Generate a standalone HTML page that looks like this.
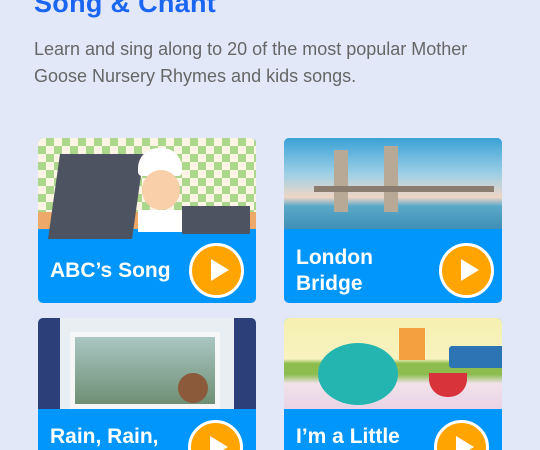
<!DOCTYPE html>
<html><head><style>
*{margin:0;padding:0;box-sizing:border-box}
html,body{width:540px;height:450px;overflow:hidden}
body{background:#e2e8f8;font-family:"Liberation Sans",sans-serif;position:relative}
h1{position:absolute;left:34px;top:-12px;font-size:27px;font-weight:bold;color:#1a66f2;letter-spacing:0.3px}
p{position:absolute;left:34px;top:36px;width:480px;font-size:18px;line-height:27px;color:#666}
.card{position:absolute;width:218px;height:165px;border-radius:5px;overflow:hidden;background:#0096fb}
.img{position:absolute;left:0;top:0;width:218px;height:91px}
.lbl{position:absolute;left:12px;color:#fff;font-size:21px;font-weight:bold;line-height:26px}
.btn{position:absolute;width:55px;height:55px;border-radius:50%;background:#ffa400;border:3px solid #fff}
.btn:after{content:"";position:absolute;left:19px;top:13px;border-left:18px solid #fff;border-top:11px solid transparent;border-bottom:11px solid transparent}
</style></head><body>
<h1>Song &amp; Chant</h1>
<p>Learn and sing along to 20 of the most popular Mother Goose Nursery Rhymes and kids songs.</p>

<div class="card" style="left:38px;top:138px">
 <div class="img" style="background:repeating-conic-gradient(#acd68c 0 25%,#fdf5e4 0 50%) 0 0/16px 16px">
  <div style="position:absolute;left:0;top:74px;width:218px;height:17px;background:#eea86a"></div>
  <div style="position:absolute;left:16px;top:16px;width:84px;height:85px;background:#4d5360;transform:skewX(-8deg)"></div>
  <div style="position:absolute;left:100px;top:10px;width:44px;height:28px;background:#fff;border-radius:20px 20px 4px 4px"></div>
  <div style="position:absolute;left:104px;top:32px;width:38px;height:40px;background:#f8cfa8;border-radius:50%"></div>
  <div style="position:absolute;left:100px;top:72px;width:44px;height:22px;background:#fff"></div>
  <div style="position:absolute;left:144px;top:68px;width:68px;height:28px;background:#4d5360"></div>
 </div>
 <div class="lbl" style="top:120px">ABC’s Song</div>
 <div class="btn" style="left:151px;top:105px"></div>
</div>

<div class="card" style="left:284px;top:138px">
 <div class="img" style="background:linear-gradient(#3aa2d6 0%,#9fd0e6 40%,#f0d6c6 65%,#5aa9c8 75%,#3f8fb7 100%)">
  <div style="position:absolute;left:50px;top:12px;width:14px;height:62px;background:#b8a996"></div>
  <div style="position:absolute;left:100px;top:8px;width:14px;height:66px;background:#b8a996"></div>
  <div style="position:absolute;left:30px;top:48px;width:180px;height:6px;background:#8a7d70"></div>
 </div>
 <div class="lbl" style="top:107px">London<br>Bridge</div>
 <div class="btn" style="left:155px;top:105px"></div>
</div>

<div class="card" style="left:38px;top:318px;height:132px;border-radius:5px 5px 0 0">
 <div class="img" style="background:#e9eef2">
  <div style="position:absolute;left:0;top:0;width:22px;height:91px;background:#2c3f78"></div>
  <div style="position:absolute;left:196px;top:0;width:22px;height:91px;background:#2c3f78"></div>
  <div style="position:absolute;left:32px;top:14px;width:150px;height:77px;background:linear-gradient(#a9c6c2,#6f8f74);border:5px solid #f6f6f6"></div>
  <div style="position:absolute;left:140px;top:55px;width:30px;height:30px;background:#8a5a3a;border-radius:50%"></div>
 </div>
 <div class="lbl" style="top:106px">Rain, Rain,</div>
 <div class="btn" style="left:150px;top:102px"></div>
</div>

<div class="card" style="left:284px;top:318px;height:132px;border-radius:5px 5px 0 0">
 <div class="img" style="background:linear-gradient(#f6f0b0 0%,#f7f2c0 45%,#8cbd4e 50%,#8cbd4e 62%,#f2e2ea 72%,#e9d3e6 100%)">
  <div style="position:absolute;left:34px;top:25px;width:80px;height:62px;background:#25b5b0;border-radius:50%"></div>
  <div style="position:absolute;left:145px;top:55px;width:38px;height:24px;background:#d8333a;border-radius:0 0 18px 18px"></div>
  <div style="position:absolute;left:165px;top:28px;width:56px;height:22px;background:#2c74b4;border-radius:3px"></div>
  <div style="position:absolute;left:115px;top:10px;width:26px;height:32px;background:#f4a040"></div>
 </div>
 <div class="lbl" style="top:106px">I’m a Little</div>
 <div class="btn" style="left:150px;top:102px"></div>
</div>
</body></html>
